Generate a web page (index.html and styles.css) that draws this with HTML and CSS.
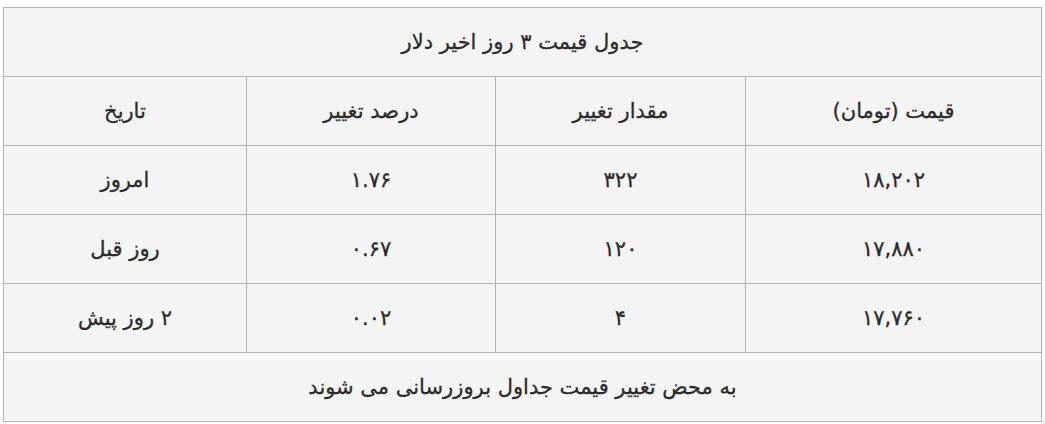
FILE: index.html
```html
<!DOCTYPE html>
<html lang="fa" dir="rtl">
<head>
<meta charset="utf-8">
<link rel="stylesheet" href="styles.css">
</head>
<body>
<table class="price-table">
  <colgroup>
    <col class="c1"><col class="c2"><col class="c3"><col class="c4">
  </colgroup>
  <tr><td colspan="4">جدول قیمت ۳ روز اخیر دلار</td></tr>
  <tr><td>قیمت (تومان)</td><td>مقدار تغییر</td><td>درصد تغییر</td><td>تاریخ</td></tr>
  <tr><td>۱۸,۲۰۲</td><td>۳۲۲</td><td>۱.۷۶</td><td>امروز</td></tr>
  <tr><td>۱۷,۸۸۰</td><td>۱۲۰</td><td>۰.۶۷</td><td>روز قبل</td></tr>
  <tr><td>۱۷,۷۶۰</td><td>۴</td><td>۰.۰۲</td><td>۲ روز پیش</td></tr>
  <tr><td colspan="4">به محض تغییر قیمت جداول بروزرسانی می شوند</td></tr>
</table>
</body>
</html>
```
FILE: styles.css
```css
html, body {
  margin: 0;
  padding: 0;
  background: #ffffff;
}
body {
  padding: 7px 3px 0 5px;
  font-family: "DejaVu Sans", sans-serif;
  color: #2b2b2b;
}
.price-table {
  width: 1038px;
  border-collapse: collapse;
  table-layout: fixed;
  background: #f5f5f5;
}
.c1 { width: 296px; }
.c2 { width: 250px; }
.c3 { width: 249px; }
.c4 { width: 243px; }
.price-table td {
  border: 1px solid #b3b3b3;
  height: 68px;
  padding: 0;
  text-align: center;
  vertical-align: middle;
  font-size: 21px;
  -webkit-text-stroke: 0.3px #2b2b2b;
}
```
